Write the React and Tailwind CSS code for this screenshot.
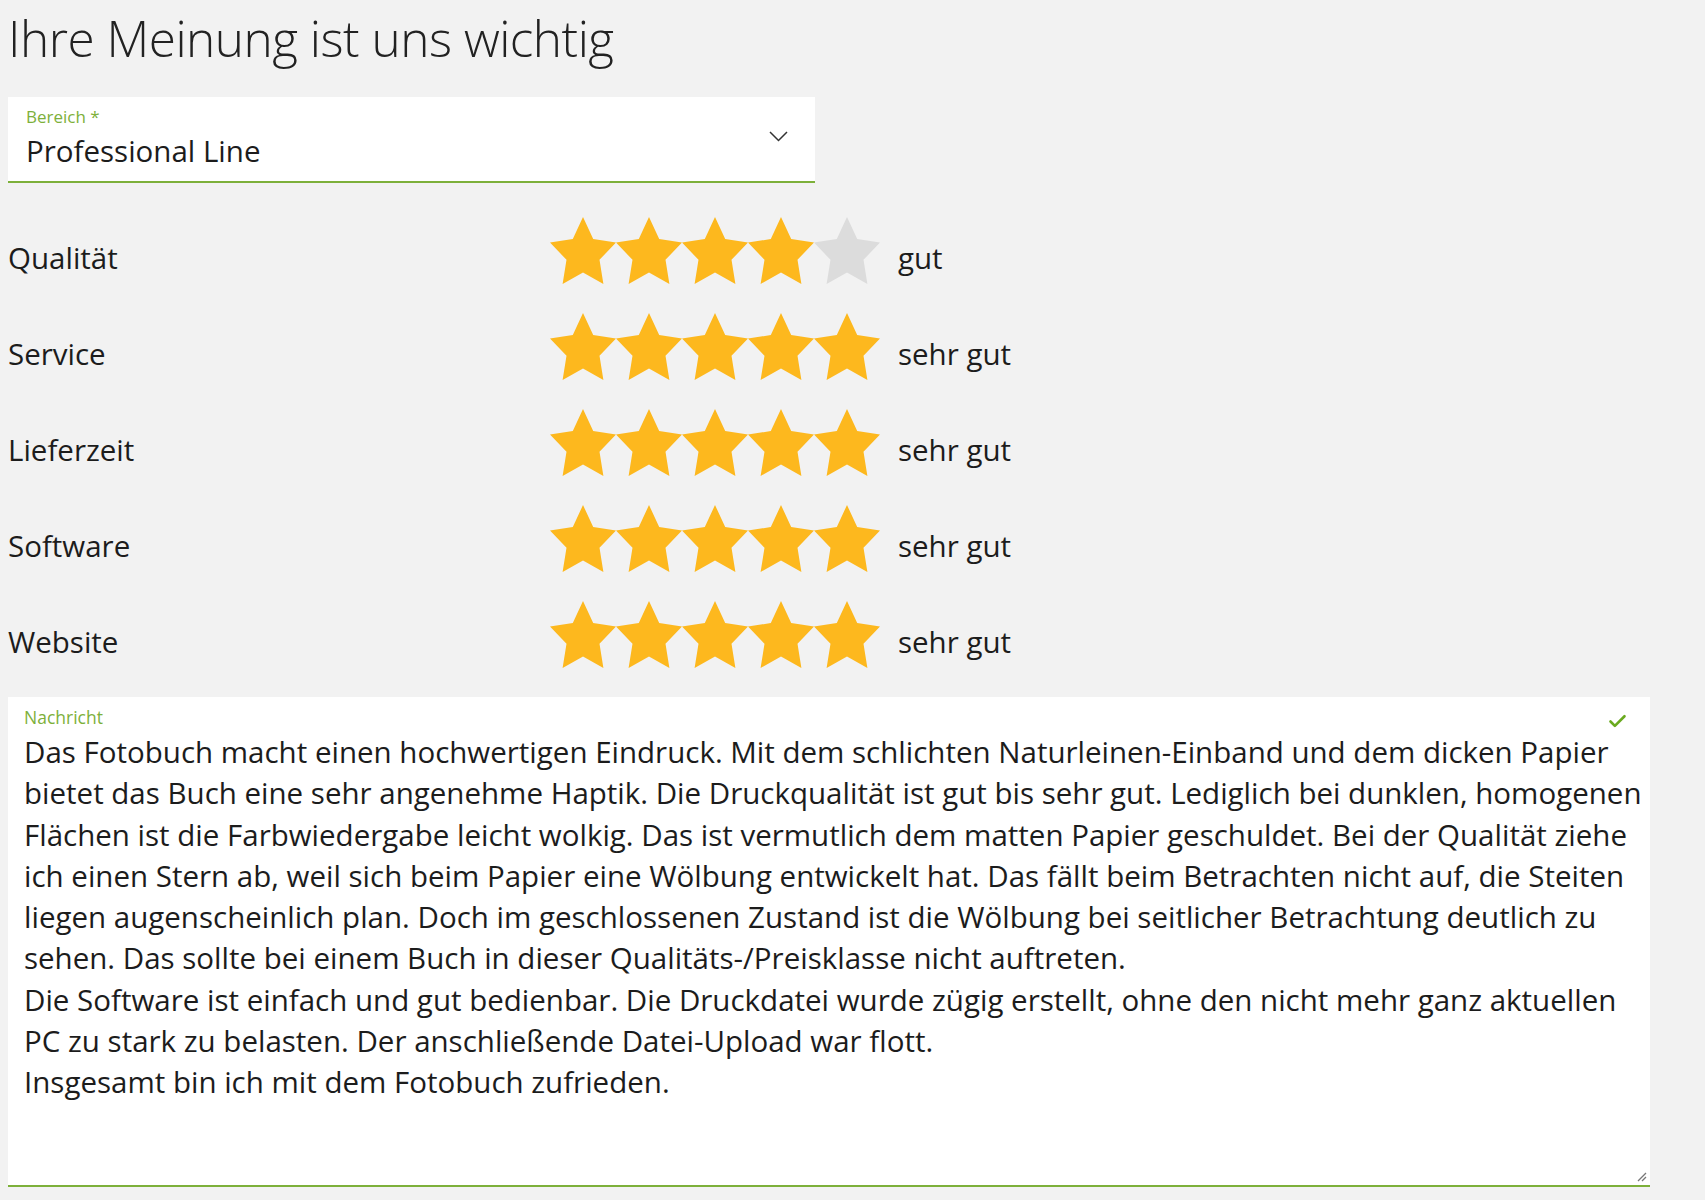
import { Check } from 'lucide-react';

const ratings = [
  { label: 'Qualität', value: 4, text: 'gut' },
  { label: 'Service', value: 5, text: 'sehr gut' },
  { label: 'Lieferzeit', value: 5, text: 'sehr gut' },
  { label: 'Software', value: 5, text: 'sehr gut' },
  { label: 'Website', value: 5, text: 'sehr gut' },
];

const messageLines = [
  'Das Fotobuch macht einen hochwertigen Eindruck. Mit dem schlichten Naturleinen-Einband und dem dicken Papier',
  'bietet das Buch eine sehr angenehme Haptik. Die Druckqualität ist gut bis sehr gut. Lediglich bei dunklen, homogenen',
  'Flächen ist die Farbwiedergabe leicht wolkig. Das ist vermutlich dem matten Papier geschuldet. Bei der Qualität ziehe',
  'ich einen Stern ab, weil sich beim Papier eine Wölbung entwickelt hat. Das fällt beim Betrachten nicht auf, die Steiten',
  'liegen augenscheinlich plan. Doch im geschlossenen Zustand ist die Wölbung bei seitlicher Betrachtung deutlich zu',
  'sehen. Das sollte bei einem Buch in dieser Qualitäts-/Preisklasse nicht auftreten.',
  'Die Software ist einfach und gut bedienbar. Die Druckdatei wurde zügig erstellt, ohne den nicht mehr ganz aktuellen',
  'PC zu stark zu belasten. Der anschließende Datei-Upload war flott.',
  'Insgesamt bin ich mit dem Fotobuch zufrieden.',
];

function Star({ filled }) {
  return (
    <svg width="66" height="68" viewBox="2 2 20 19.3" preserveAspectRatio="none">
      <path
        d="M12 2l3.09 6.26L22 9.27l-5 4.87 1.18 6.88L12 17.77l-6.18 3.25L7 14.14 2 9.27l6.91-1.01L12 2z"
        fill={filled ? '#fdb81e' : '#dcdcdc'}
      />
    </svg>
  );
}

function RatingRow({ label, value, text }) {
  return (
    <div className="flex h-[96px] items-center">
      <div className="w-[542px] text-[29.5px] text-[#1c1c1c]">{label}</div>
      <div className="mb-[14px] flex">
        {[1, 2, 3, 4, 5].map((n) => (
          <Star key={n} filled={n <= value} />
        ))}
      </div>
      <div className="ml-[18px] text-[29.5px] text-[#1c1c1c]">{text}</div>
    </div>
  );
}

export default function App() {
  return (
    <div className="min-h-[1200px] bg-[#f2f2f2] pl-[8px] pt-[6px] font-['Open_Sans',sans-serif]">
      <div className="w-[1642px]">
        <h1 className="text-[49.5px] font-light leading-[64px] tracking-[-0.5px] text-[#222]">
          Ihre Meinung ist uns wichtig
        </h1>

        <div className="relative mt-[27px] h-[86px] w-[807px] border-b-2 border-[#7db03a] bg-white px-[18px] pt-[9px]">
          <div className="text-[17px] leading-[22px] text-[#7db03a]">Bereich *</div>
          <div className="mt-[4px] text-[29.5px] leading-[38px] text-[#1c1c1c]">Professional Line</div>
          <svg
            className="absolute right-[27px] top-[34px]"
            width="19"
            height="11"
            viewBox="0 0 19 11"
          >
            <path d="M1 1l8.5 8.5L18 1" fill="none" stroke="#333" strokeWidth="1.5" />
          </svg>
        </div>

        <div className="mt-[27px]">
          {ratings.map((r) => (
            <RatingRow key={r.label} {...r} />
          ))}
        </div>

        <div className="relative mt-[7px] h-[490px] border-b-2 border-[#7db03a] bg-white px-[16px] pt-[9px]">
          <div className="text-[17.5px] leading-[22px] text-[#7db03a]">Nachricht</div>
          <Check
            className="absolute right-[22px] top-[14px] h-[21px] w-[21px] text-[#6aaa1f]"
            strokeWidth={3}
          />
          <div className="mt-[3px] text-[29.5px] leading-[41.3px] text-[#1c1c1c]">
            {messageLines.map((line, i) => (
              <div key={i} className="whitespace-nowrap">
                {line}
              </div>
            ))}
          </div>
          <svg
            className="absolute bottom-[3px] right-[3px]"
            width="12"
            height="12"
            viewBox="0 0 12 12"
          >
            <path d="M11 3L3 11M11 7L7 11" stroke="#777" strokeWidth="1.3" />
          </svg>
        </div>
      </div>
    </div>
  );
}
